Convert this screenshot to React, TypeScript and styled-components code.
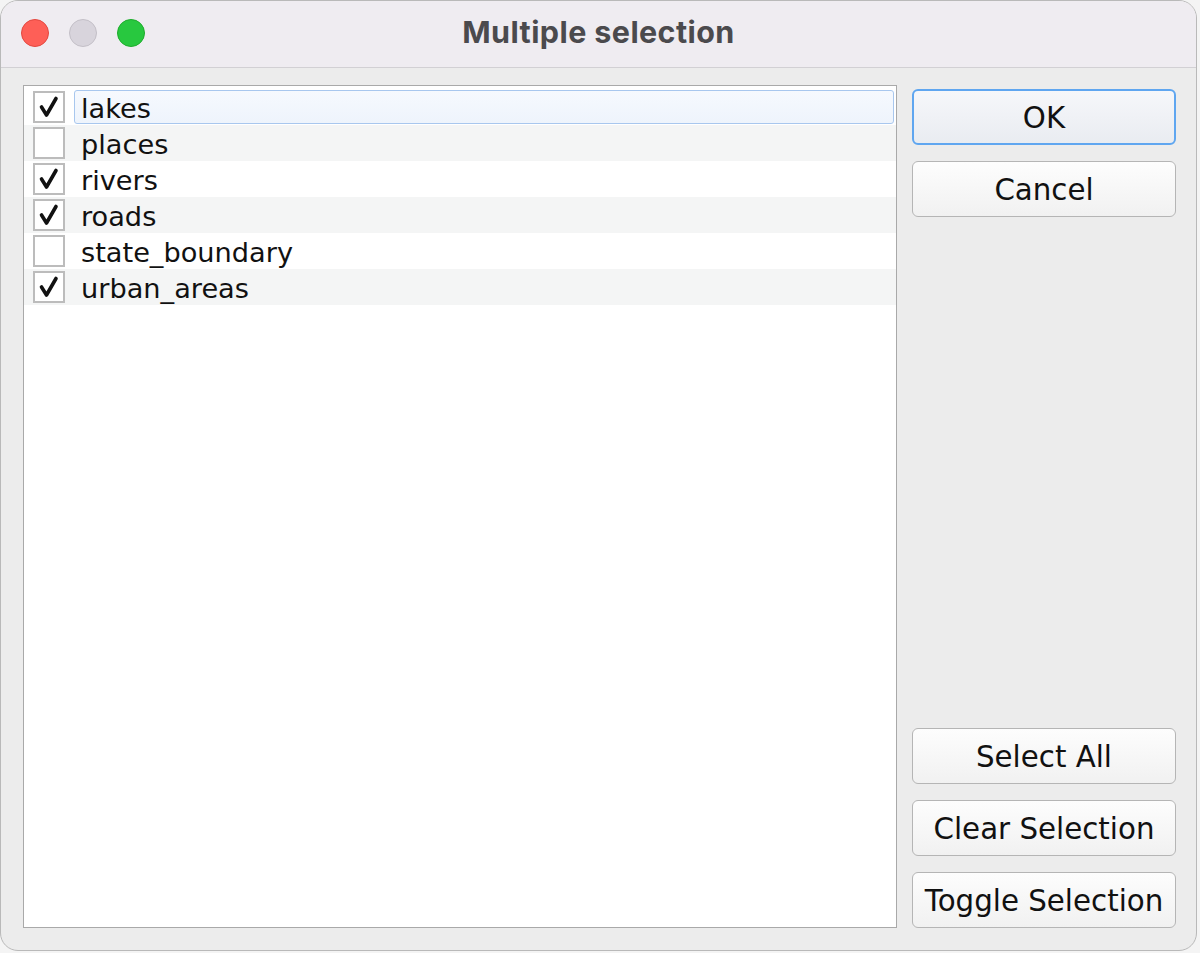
import React from "react";
import styled, { createGlobalStyle } from "styled-components";

const Global = createGlobalStyle`
  html, body { margin: 0; padding: 0; background: #f4f4f4; }
  body { width: 1200px; height: 953px; overflow: hidden; }
`;

const Window = styled.div`
  box-sizing: border-box;
  width: 1197px;
  height: 951px;
  border: 1px solid #b9b9b9;
  border-radius: 18px;
  background: #ececec;
  display: flex;
  flex-direction: column;
  overflow: hidden;
`;

const TitleBar = styled.div`
  position: relative;
  height: 66px;
  flex: none;
  background: #efecf1;
  border-bottom: 1px solid #d2d0d4;
  display: flex;
  align-items: center;
  justify-content: center;
`;

const Lights = styled.div`
  position: absolute;
  left: 20px;
  top: 18px;
  display: flex;
  gap: 20px;
`;

const Light = styled.span<{ $c: string; $b: string }>`
  width: 28px;
  height: 28px;
  box-sizing: border-box;
  border-radius: 50%;
  background: ${(p) => p.$c};
  border: 1px solid ${(p) => p.$b};
`;

const Title = styled.div`
  font-family: Inter, "Liberation Sans", sans-serif;
  font-weight: 700;
  font-size: 30.5px;
  color: #4b4a4d;
  letter-spacing: 0.4px;
  margin-top: -5px;
`;

const Body = styled.div`
  flex: 1;
  display: flex;
  gap: 15px;
  padding: 17px 21px 22px 22px;
  min-height: 0;
`;

const List = styled.div`
  flex: none;
  width: 874px;
  box-sizing: border-box;
  background: #ffffff;
  border: 1px solid #a9a9a9;
  padding-top: 3px;
  display: flex;
  flex-direction: column;
`;

const Row = styled.div<{ $alt: boolean }>`
  height: 36px;
  display: flex;
  align-items: center;
  padding-left: 9px;
  padding-right: 2px;
  background: ${(p) => (p.$alt ? "#f4f5f5" : "#ffffff")};
`;

const Box = styled.span`
  flex: none;
  width: 32px;
  height: 32px;
  box-sizing: border-box;
  border: 2px solid #bcbcbc;
  background: #fff;
  display: flex;
  align-items: center;
  justify-content: center;
`;

const Label = styled.span<{ $focus: boolean }>`
  flex: 1;
  margin-left: 9px;
  height: 34px;
  box-sizing: border-box;
  display: flex;
  align-items: center;
  padding-left: 6px;
  padding-top: 2px;
  font-family: "DejaVu Sans", sans-serif;
  font-size: 27.2px;
  color: #111;
  border-radius: 3px;
  border: 1px solid ${(p) => (p.$focus ? "#a8c7ee" : "transparent")};
  background: ${(p) => (p.$focus ? "linear-gradient(#f6f9fe, #eef4fc)" : "transparent")};
`;

const Buttons = styled.div`
  flex: 1;
  display: flex;
  flex-direction: column;
  gap: 16px;
  padding-top: 4px;
`;

const Spacer = styled.div`
  flex: 1;
`;

const Button = styled.button<{ $primary?: boolean }>`
  height: 56px;
  box-sizing: border-box;
  width: 264px;
  border-radius: 6px;
  font-family: "DejaVu Sans", sans-serif;
  font-size: 29.3px;
  color: #111;
  padding: 2px 0 0;
  white-space: nowrap;
  border: ${(p) => (p.$primary ? "2px solid #5fa6f0" : "1.5px solid #b5b5b5")};
  background: ${(p) =>
    p.$primary ? "linear-gradient(#f6f7fa, #e9ecf1)" : "linear-gradient(#fdfdfd, #f1f1f1)"};
`;

const Check = () => (
  <svg width="22" height="22" viewBox="0 0 22 22">
    <path d="M3.5 11 L8.5 19 L18 2.5" fill="none" stroke="#111" strokeWidth="3.6" strokeLinecap="round" strokeLinejoin="round" />
  </svg>
);

const items: [string, boolean][] = [
  ["lakes", true],
  ["places", false],
  ["rivers", true],
  ["roads", true],
  ["state_boundary", false],
  ["urban_areas", true],
];

export default function App() {
  return (
    <>
      <Global />
      <Window>
        <TitleBar>
          <Lights>
            <Light $c="#fe5f57" $b="#e3473f" />
            <Light $c="#d8d4dc" $b="#c3bfc7" />
            <Light $c="#28c83f" $b="#1eac2c" />
          </Lights>
          <Title>Multiple selection</Title>
        </TitleBar>
        <Body>
          <List>
            {items.map(([name, on], i) => (
              <Row key={name} $alt={i % 2 === 1}>
                <Box>{on && <Check />}</Box>
                <Label $focus={i === 0}>{name}</Label>
              </Row>
            ))}
          </List>
          <Buttons>
            <Button $primary>OK</Button>
            <Button>Cancel</Button>
            <Spacer />
            <Button>Select All</Button>
            <Button>Clear Selection</Button>
            <Button>Toggle Selection</Button>
          </Buttons>
        </Body>
      </Window>
    </>
  );
}
